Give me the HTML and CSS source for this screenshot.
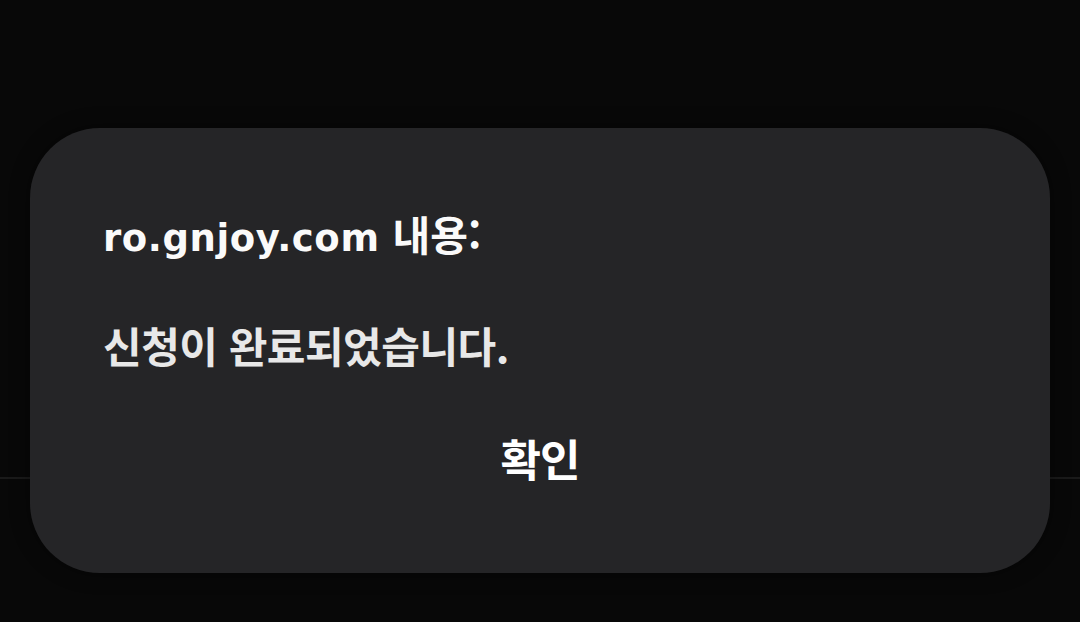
FILE: index.html
```html
<!DOCTYPE html>
<html lang="ko">
<head>
<meta charset="utf-8">
<link rel="stylesheet" href="styles.css">
</head>
<body>
<div class="page">
  <div class="page-rule"></div>
</div>
<div class="dialog">
  <div class="dialog-title"><span class="title-host">ro.gnjoy.com</span> <span class="title-label">내용:</span></div>
  <div class="dialog-message">신청이 완료되었습니다.</div>
  <div class="dialog-actions">
    <button class="dialog-ok">확인</button>
  </div>
</div>
</body>
</html>
```
FILE: styles.css
```css
html, body {
  margin: 0;
  padding: 0;
  background: #080808;
  width: 1080px;
  height: 622px;
  overflow: hidden;
  font-family: "Noto Sans CJK KR", "Noto Sans", sans-serif;
}
.page {
  padding-top: 477px;
}
.page-rule {
  height: 2px;
  background: #1a1a1a;
}
.dialog {
  position: absolute;
  left: 30px;
  top: 128px;
  width: 1020px;
  height: 445px;
  box-sizing: border-box;
  background: #252527;
  border-radius: 70px;
  padding: 80px 73px 0 73px;
  box-shadow: 0 0 20px rgba(0,0,0,0.4);
}
.dialog-title {
  font-family: "DejaVu Sans", "Noto Sans CJK KR", sans-serif;
  font-size: 37px;
  line-height: 50px;
  font-weight: 700;
  color: #fafafa;
}
.title-host {
  letter-spacing: 0.6px;
}
.title-label {
  font-family: "Noto Sans CJK KR", sans-serif;
  font-size: 41px;
}
.dialog-message {
  margin-top: 56px;
  font-size: 42px;
  line-height: 50px;
  font-weight: 700;
  color: #e8e8e8;
  letter-spacing: -0.5px;
}
.dialog-actions {
  margin-top: 60px;
  display: flex;
  justify-content: center;
}
.dialog-ok {
  background: none;
  border: none;
  padding: 0;
  margin: 0;
  font-family: inherit;
  font-size: 44px;
  line-height: 56px;
  font-weight: 700;
  color: #ffffff;
  letter-spacing: -1px;
}
```
